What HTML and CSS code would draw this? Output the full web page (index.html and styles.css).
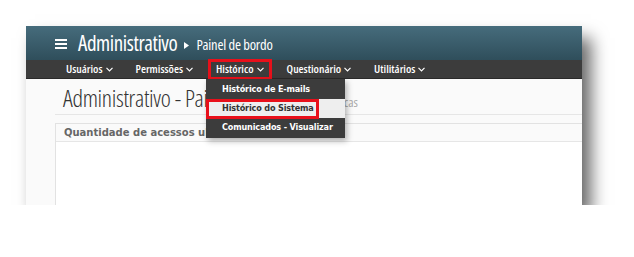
FILE: index.html
```html
<!DOCTYPE html>
<html lang="pt-BR">
<head>
    <meta charset="UTF-8">
    <title>Administrativo - Painel de bordo</title>
    <link rel="stylesheet" href="styles.css">
</head>
<body>
    <div class="frame">
        <div class="topbar">
            <svg class="menu-icon" width="12" height="10" viewBox="0 0 12 10">
                <rect x="0" y="0" width="12" height="2" fill="#fff"/>
                <rect x="0" y="4" width="12" height="2" fill="#fff"/>
                <rect x="0" y="8" width="12" height="2" fill="#fff"/>
            </svg>
            <span class="app-title">Administrativo</span>
            <svg class="crumb-arrow" width="5" height="7" viewBox="0 0 5 7">
                <polygon points="0,0 5,3.5 0,7" fill="#fff"/>
            </svg>
            <span class="crumb">Painel de bordo</span>
        </div>
        <div class="navbar">
            <span class="nav-item">Usuários <svg class="caret" width="7" height="5" viewBox="0 0 7 5"><polyline points="0.5,0.8 3.5,3.8 6.5,0.8" fill="none" stroke="#fff" stroke-width="1.2"/></svg></span>
            <span class="nav-item">Permissões <svg class="caret" width="7" height="5" viewBox="0 0 7 5"><polyline points="0.5,0.8 3.5,3.8 6.5,0.8" fill="none" stroke="#fff" stroke-width="1.2"/></svg></span>
            <span class="nav-item active">Histórico <svg class="caret" width="7" height="5" viewBox="0 0 7 5"><polyline points="0.5,0.8 3.5,3.8 6.5,0.8" fill="none" stroke="#fff" stroke-width="1.2"/></svg></span>
            <span class="nav-item">Questionário <svg class="caret" width="7" height="5" viewBox="0 0 7 5"><polyline points="0.5,0.8 3.5,3.8 6.5,0.8" fill="none" stroke="#fff" stroke-width="1.2"/></svg></span>
            <span class="nav-item">Utilitários <svg class="caret" width="7" height="5" viewBox="0 0 7 5"><polyline points="0.5,0.8 3.5,3.8 6.5,0.8" fill="none" stroke="#fff" stroke-width="1.2"/></svg></span>
        </div>
        <div class="content">
            <div class="page-title">Administrativo - Painel de bordo <small>Estatísticas</small></div>
            <div class="panel">
                <div class="panel-heading">Quantidade de acessos ultimos 30 dias</div>
                <div class="panel-body"></div>
            </div>
        </div>

        <ul class="dropdown">
            <li>Histórico de E-mails</li>
            <li class="selected">Histórico do Sistema</li>
            <li>Comunicados - Visualizar</li>
        </ul>
    </div>
</body>
</html>
```

FILE: styles.css
```css
body {
    margin: 0;
    background-color: #fff;
    font-family: "Open Sans", sans-serif;
}
.frame {
    position: relative;
    width: 556px;
    height: 179px;
    margin: 26px 0 0 26px;
    background-color: #fafafa;
    overflow: hidden;
    box-shadow: 9px 12px 16px rgba(0, 0, 0, 0.6);
}
.topbar {
    height: 34px;
    display: flex;
    align-items: center;
    padding-left: 29px;
    color: #fff;
    background: linear-gradient(#466c7c, #2f4e5b);
    font-family: "Open Sans", sans-serif;
    font-stretch: 75%;
}
.menu-icon {
    margin: 2px 11px 0 0;
}
.app-title {
    font-size: 21px;
    letter-spacing: -0.4px;
}
.crumb-arrow {
    margin: 4px 7px 0 7px;
}
.crumb {
    font-size: 14.5px;
    letter-spacing: -0.2px;
    margin-top: 3px;
}
.navbar {
    height: 18px;
    display: flex;
    align-items: center;
    padding-left: 30px;
    background-color: #3c3c3c;
    border-bottom: 1px solid #2a2a2a;
    font-family: "Open Sans", sans-serif;
    font-stretch: 75%;
}
.nav-item {
    position: relative;
    display: flex;
    align-items: center;
    gap: 3px;
    color: #fff;
    font-size: 11.5px;
    font-weight: 600;
    padding: 0 10px;
    margin-right: 3px;
    line-height: 18px;
}
.caret {
    margin-top: 1px;
}
.nav-item.active::after {
    content: "";
    position: absolute;
    top: -1px;
    bottom: -2px;
    left: 2px;
    right: 2px;
    border: 3px solid #e8101a;
}
.content {
    padding: 7px 0 0 29px;
}
.page-title {
    font-family: "Open Sans", sans-serif;
    font-stretch: 75%;
    font-weight: 300;
    font-size: 24px;
    letter-spacing: -0.3px;
    line-height: 24px;
    color: #333;
    padding: 0 0 0 8px;
    border-bottom: 1px solid #e6e6e6;
}
.page-title small {
    font-size: 13px;
    font-weight: 400;
    letter-spacing: 0;
    color: #aaa;
}
.panel {
    margin-top: 8px;
    background-color: #fff;
    border: 1px solid #e2e2e2;
    border-right: none;
}
.panel-heading {
    height: 17px;
    line-height: 17px;
    padding-left: 8px;
    font-family: "DejaVu Sans", Verdana, sans-serif;
    font-size: 10px;
    font-weight: bold;
    color: #666;
    background-color: #fafafa;
    border-bottom: 1px solid #e6e6e6;
    white-space: nowrap;
}
.panel-body {
    height: 80px;
}
.dropdown {
    position: absolute;
    left: 180px;
    top: 53px;
    width: 139px;
    margin: 0;
    padding: 1px 0;
    list-style: none;
    background-color: #3c3c3c;
    box-shadow: 2px 3px 6px rgba(0, 0, 0, 0.3);
    font-family: "DejaVu Sans Condensed", "DejaVu Sans", sans-serif;
}
.dropdown li {
    position: relative;
    height: 19px;
    line-height: 19px;
    padding-left: 16px;
    color: #fff;
    font-size: 9px;
    font-weight: bold;
    letter-spacing: -0.15px;
    white-space: nowrap;
}
.dropdown li.selected {
    color: #333;
    background-color: #eee;
}
.dropdown li.selected::after {
    content: "";
    position: absolute;
    top: 0;
    bottom: -1px;
    left: 0;
    right: 26px;
    border: 3px solid #e8101a;
}
```
